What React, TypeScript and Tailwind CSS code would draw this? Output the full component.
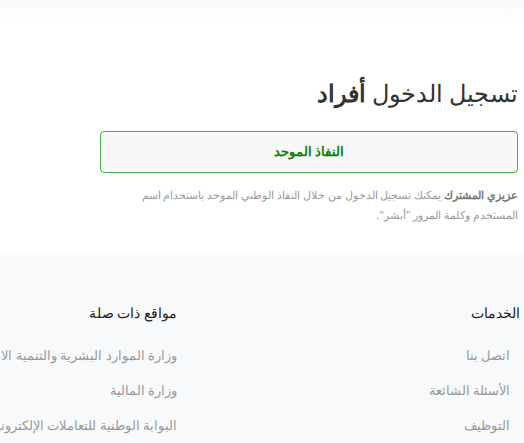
const services = ["اتصل بنا", "الأسئلة الشائعة", "التوظيف"];
const related = [
  "وزارة الموارد البشرية والتنمية الاجتماعية",
  "وزارة المالية",
  "البوابة الوطنية للتعاملات الإلكترونية",
];

function FooterColumn({ title, links, indent }: { title: string; links: string[]; indent?: boolean }) {
  return (
    <div className="w-[343px] shrink-0">
      <h3 className="text-[14px] leading-5 text-[#222]">{title}</h3>
      <ul className={`mt-[22px] flex flex-col gap-[15px] ${indent ? "pr-[10px]" : ""}`}>
        {links.map((link) => (
          <li key={link} className="whitespace-nowrap text-[13px] leading-5 text-[#999]">
            {link}
          </li>
        ))}
      </ul>
    </div>
  );
}

export default function App() {
  return (
    <div
      dir="rtl"
      className="min-h-[443px] overflow-hidden bg-white"
      style={{ fontFamily: '"Noto Sans", sans-serif' }}
    >
      <div className="h-5 bg-gradient-to-b from-[#f9f9f9] to-white" />

      <main className="pr-[6px] pt-[57px] pb-[30px]">
        <div className="w-[418px]">
          <h1 className="text-[23.5px] leading-8 text-[#333]">
            تسجيل الدخول <span className="font-bold">أفراد</span>
          </h1>

          <button className="mt-[22px] flex h-[42px] w-full items-center justify-center rounded-[4px] border border-[#43b047] bg-[#f8f8f8] text-[13px] font-bold text-[#0a7f0a]">
            النفاذ الموحد
          </button>

          <p className="mt-[12px] text-[11px] leading-5 text-[#9a9a9a]">
            <span className="whitespace-nowrap">
              <span className="font-bold text-[#777]">عزيزي المشترك</span> يمكنك تسجيل الدخول من خلال النفاذ الوطني
              الموحد باستخدام اسم
            </span>
            <br />
            المستخدم وكلمة المرور "أبشر".
          </p>
        </div>
      </main>

      <footer className="bg-[#f8f9fa] pr-1 pt-[48px] pb-6">
        <div className="flex">
          <FooterColumn title="الخدمات" links={services} indent />
          <FooterColumn title="مواقع ذات صلة" links={related} />
        </div>
      </footer>
    </div>
  );
}
